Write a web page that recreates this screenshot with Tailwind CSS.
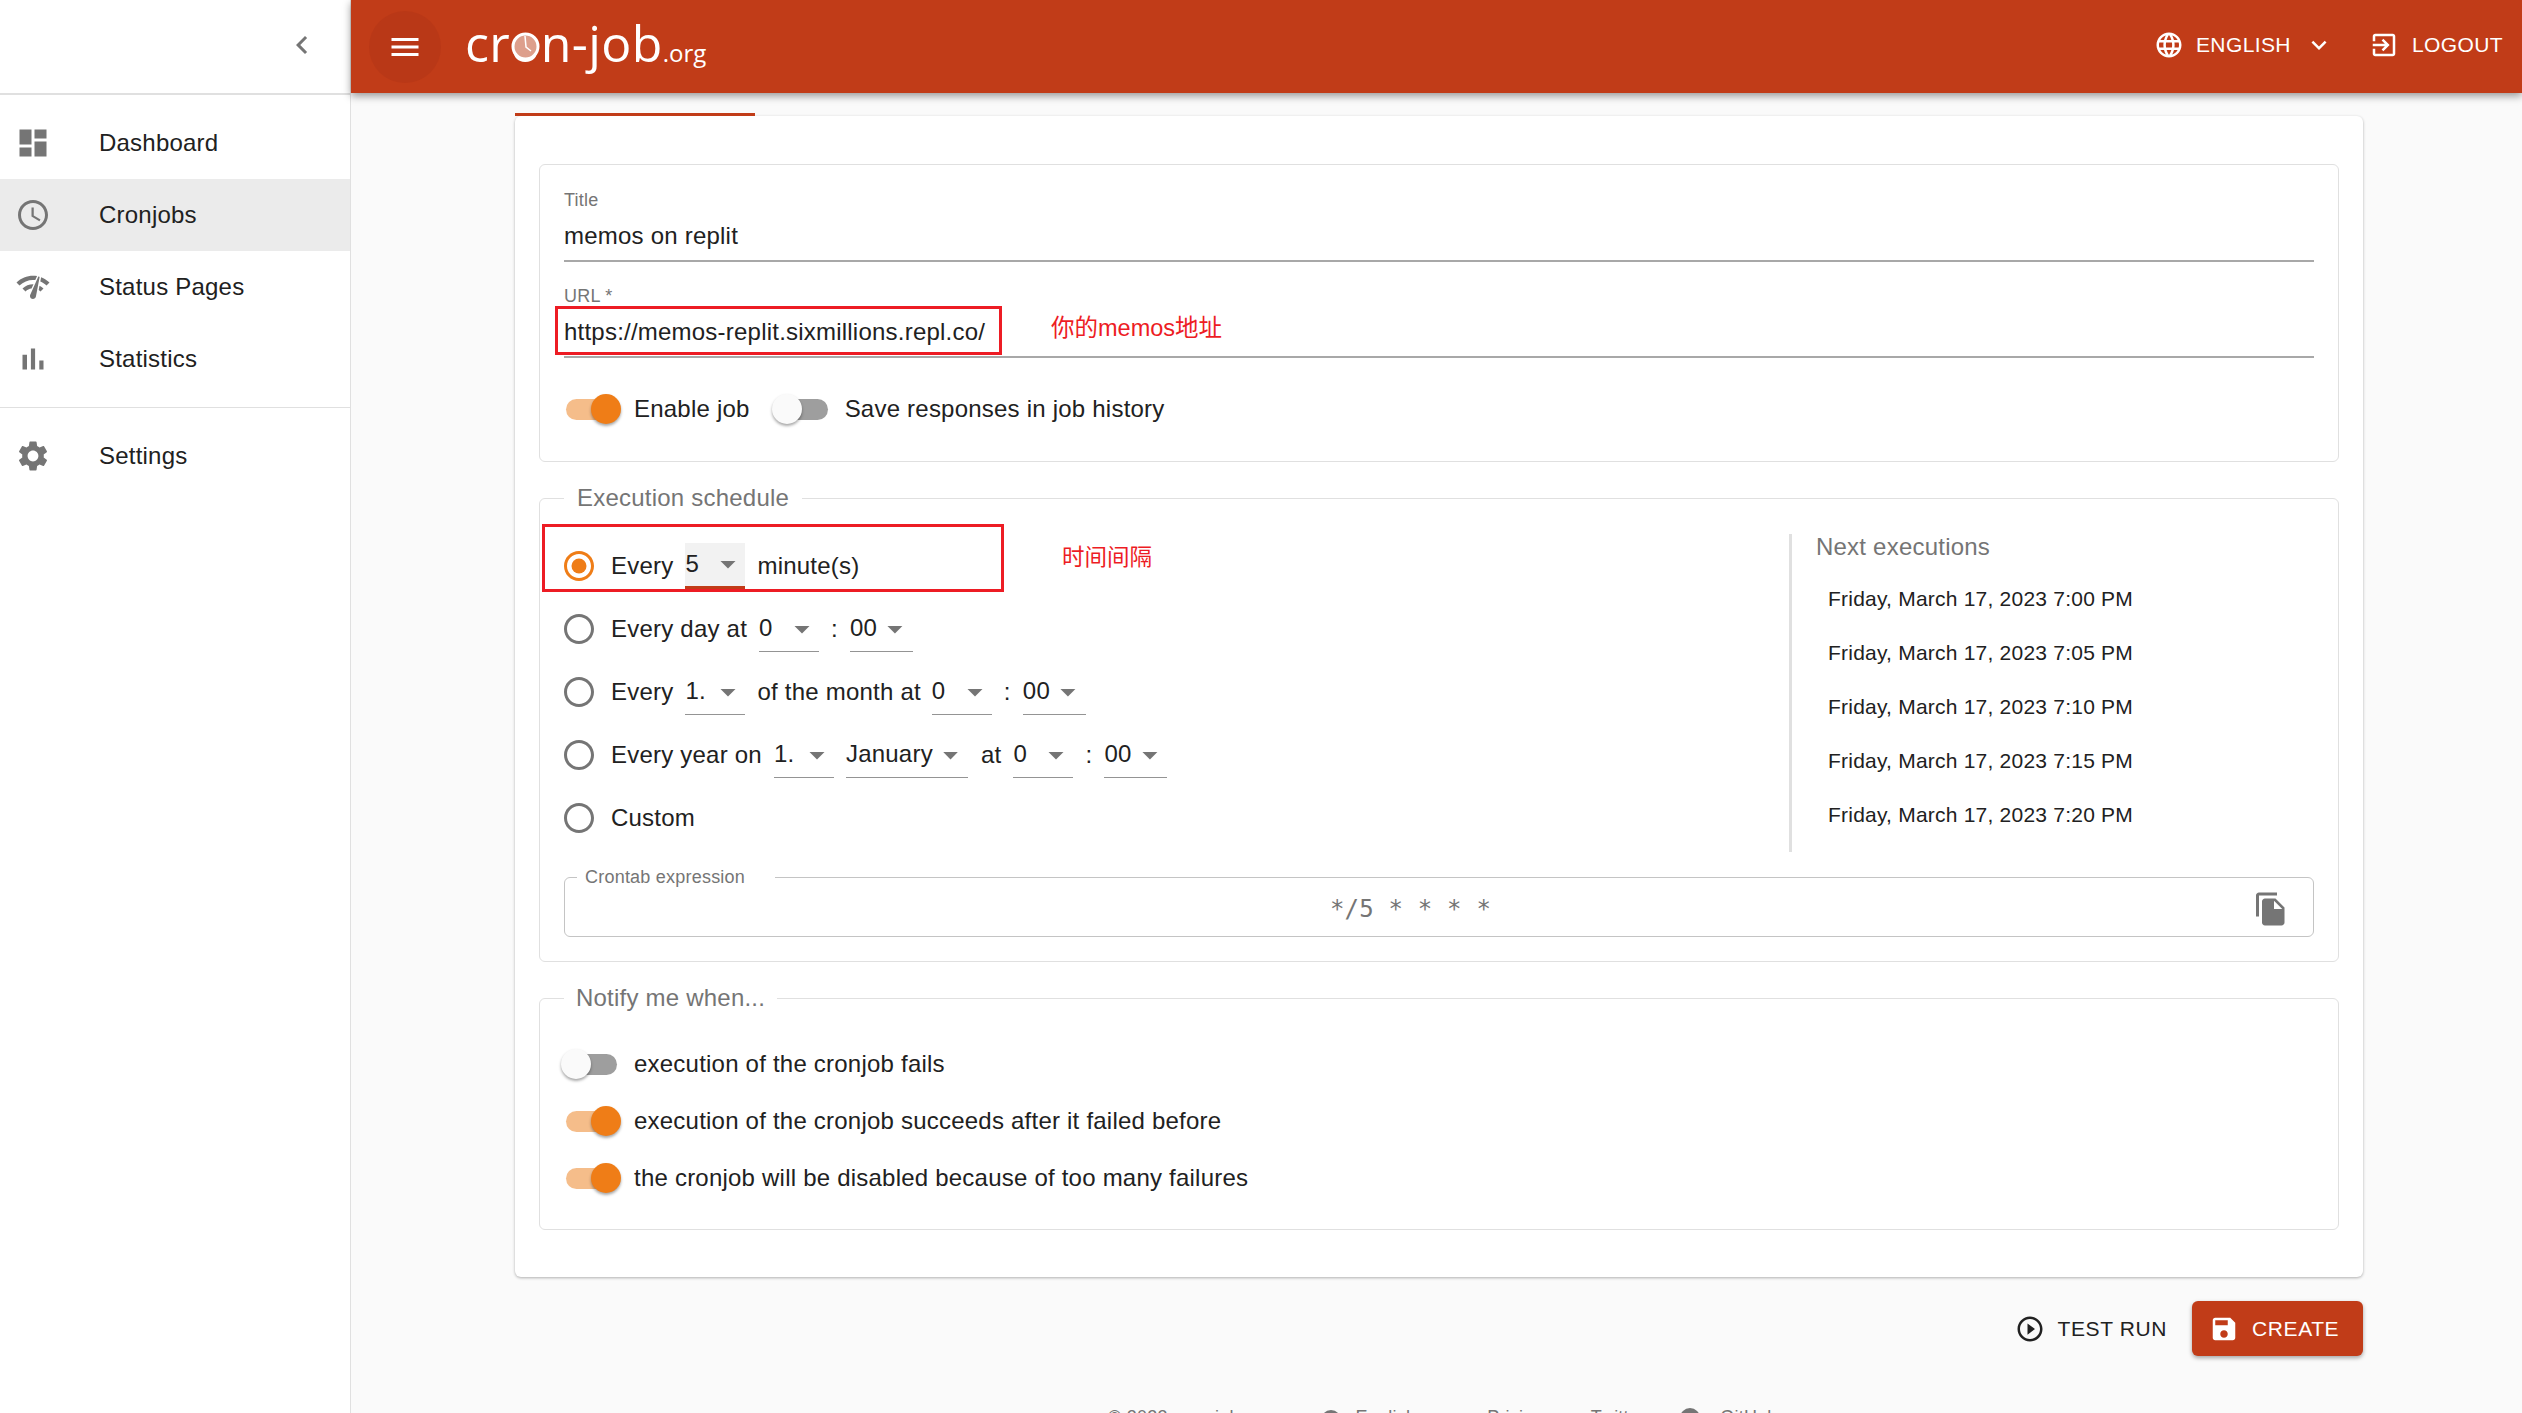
<!DOCTYPE html>
<html lang="en"><head><meta charset="utf-8"><title>cron-job.org</title>
<script src="https://cdn.jsdelivr.net/npm/@tailwindcss/browser@4"></script>
</head>
<body class="bg-[#fafafa] font-['Liberation_Sans',Arial,sans-serif] text-[24px] tracking-[0.22px] text-[#212121] overflow-hidden">
<div class="flex h-[1413px] w-[2522px] overflow-hidden">
<!-- SIDEBAR -->
<aside class="w-[351px] shrink-0 bg-white border-r border-[#e0e0e0] flex flex-col">
  <div class="h-[95px] border-b-2 border-[#e0e0e0] flex items-center pl-[284px] pb-[3px]">
    <svg class="w-[36px] h-[36px] fill-[#757575]" viewBox="0 0 24 24"><path d="M15.41 7.41L14 6l-6 6 6 6 1.41-1.41L10.83 12z"/></svg>
  </div>
  <nav class="pt-[12px] pb-[12px] border-b border-[#e0e0e0]">
    <a class="h-[72px] flex items-center pl-[15px]"><svg class="w-[36px] h-[36px] fill-[#757575]" viewBox="0 0 24 24"><path d="M3 13h8V3H3v10zm0 8h8v-6H3v6zm10 0h8V11h-8v10zm0-18v6h8V3h-8z"/></svg><span class="ml-[48px]">Dashboard</span></a>
    <a class="h-[72px] flex items-center pl-[15px] bg-[#ebebeb]"><svg class="w-[36px] h-[36px] fill-[#757575]" viewBox="0 0 24 24"><path d="M11.99 2C6.47 2 2 6.48 2 12s4.47 10 9.99 10C17.52 22 22 17.52 22 12S17.52 2 11.99 2zM12 20c-4.42 0-8-3.58-8-8s3.58-8 8-8 8 3.58 8 8-3.58 8-8 8zm.5-13H11v6l5.25 3.15.75-1.23-4.5-2.67z"/></svg><span class="ml-[48px]">Cronjobs</span></a>
    <a class="h-[72px] flex items-center pl-[15px]"><svg class="w-[36px] h-[36px] fill-[#757575]" viewBox="0 0 24 24"><path d="M15.9 5c-.17 0-.32.09-.41.23l-.07.15-5.18 11.65c-.16.29-.26.61-.26.96 0 1.11.9 2.01 2.01 2.01.96 0 1.77-.68 1.96-1.59l.01-.03L16.4 5.5c0-.28-.22-.5-.5-.5zM1 9l2 2c2.88-2.88 6.79-4.08 10.53-3.62l1.19-2.68C9.89 3.84 4.74 5.27 1 9zm20 2l2-2c-1.64-1.64-3.55-2.82-5.59-3.57l-.53 2.82c1.5.62 2.9 1.53 4.12 2.75zm-4 4l2-2c-.8-.8-1.7-1.42-2.66-1.89l-.55 2.92c.42.27.83.59 1.21.97zM5 13l2 2c1.13-1.13 2.56-1.79 4.03-2l1.28-2.88c-2.63-.08-5.3.87-7.31 2.88z"/></svg><span class="ml-[48px]">Status Pages</span></a>
    <a class="h-[72px] flex items-center pl-[15px]"><svg class="w-[36px] h-[36px] fill-[#757575]" viewBox="0 0 24 24"><path d="M5 9.2h3V19H5zM10.6 5h2.8v14h-2.8zm5.6 8H19v6h-2.8z"/></svg><span class="ml-[48px]">Statistics</span></a>
  </nav>
  <div class="pt-[12px]">
    <a class="h-[72px] flex items-center pl-[15px]"><svg class="w-[36px] h-[36px] fill-[#757575]" viewBox="0 0 24 24"><path d="M19.14 12.94c.04-.3.06-.61.06-.94 0-.32-.02-.64-.07-.94l2.03-1.58c.18-.14.23-.41.12-.61l-1.92-3.32c-.12-.22-.37-.29-.59-.22l-2.39.96c-.5-.38-1.03-.7-1.62-.94l-.36-2.54c-.04-.24-.24-.41-.48-.41h-3.84c-.24 0-.43.17-.47.41l-.36 2.54c-.59.24-1.13.57-1.62.94l-2.39-.96c-.22-.08-.47 0-.59.22L2.74 8.87c-.12.21-.08.47.12.61l2.03 1.58c-.05.3-.09.63-.09.94s.02.64.07.94l-2.03 1.58c-.18.14-.23.41-.12.61l1.92 3.32c.12.22.37.29.59.22l2.39-.96c.5.38 1.03.7 1.62.94l.36 2.54c.05.24.24.41.48.41h3.84c.24 0 .44-.17.47-.41l.36-2.54c.59-.24 1.13-.56 1.62-.94l2.39.96c.22.08.47 0 .59-.22l1.92-3.32c.12-.22.07-.47-.12-.61l-2.01-1.58zM12 15.6c-1.98 0-3.6-1.62-3.6-3.6s1.62-3.6 3.6-3.6 3.6 1.62 3.6 3.6-1.62 3.6-3.6 3.6z"/></svg><span class="ml-[48px]">Settings</span></a>
  </div>
</aside>
<!-- MAIN -->
<div class="flex-1 min-w-0 flex flex-col">
  <header class="h-[93px] shrink-0 bg-[#c13c18] text-white flex items-center pl-[18px] pr-[19px] shadow-[0_3px_8px_rgba(0,0,0,0.4)] relative z-10">
    <div class="w-[72px] h-[72px] rounded-full bg-[#b93817] flex items-center justify-center">
      <svg class="w-[36px] h-[36px] fill-white" viewBox="0 0 24 24"><path d="M3 18h18v-2H3v2zm0-5h18v-2H3v2zm0-7v2h18V6H3z"/></svg>
    </div>
    <div class="ml-[24px] mt-[2px] font-['Open_Sans',sans-serif] font-normal text-[50px] leading-[60px] tracking-[0.4px] flex items-baseline">
      <span>cr</span><span class="relative">o<svg class="absolute left-[1px] top-[19px] w-[29px] h-[29px]" viewBox="0 0 29 29"><circle cx="14.5" cy="14.5" r="12.5" fill="#dd9f8c" stroke="#fff" stroke-width="3"/><path d="M14 4 L15 15 L20 19" fill="none" stroke="#fff" stroke-width="1.5"/></svg></span><span>n-job</span><span class="text-[24px] tracking-normal font-normal">.org</span>
    </div>
    <div class="ml-auto flex items-center text-[21px] tracking-[0.4px] pb-[3px]">
      <svg class="w-[30px] h-[30px] fill-white" viewBox="0 0 24 24"><path d="M11.99 2C6.47 2 2 6.48 2 12s4.47 10 9.99 10C17.52 22 22 17.52 22 12S17.52 2 11.99 2zm6.93 6h-2.95c-.32-1.25-.78-2.45-1.38-3.56 1.84.63 3.37 1.91 4.33 3.56zM12 4.04c.83 1.2 1.48 2.53 1.91 3.96h-3.82c.43-1.43 1.08-2.76 1.91-3.96zM4.26 14C4.1 13.36 4 12.69 4 12s.1-1.36.26-2h3.38c-.08.66-.14 1.32-.14 2 0 .68.06 1.34.14 2H4.26zm.82 2h2.95c.32 1.25.78 2.45 1.38 3.56-1.84-.63-3.37-1.9-4.33-3.56zm2.95-8H5.08c.96-1.66 2.49-2.93 4.33-3.56C8.81 5.55 8.35 6.75 8.03 8zM12 19.96c-.83-1.2-1.48-2.53-1.91-3.96h3.82c-.43 1.43-1.08 2.76-1.91 3.96zM14.34 14H9.66c-.09-.66-.16-1.32-.16-2 0-.68.07-1.35.16-2h4.68c.09.65.16 1.32.16 2 0 .68-.07 1.34-.16 2zm.25 5.56c.6-1.11 1.06-2.31 1.38-3.56h2.95c-.96 1.65-2.49 2.93-4.33 3.56zM16.36 14c.08-.66.14-1.32.14-2 0-.68-.06-1.34-.14-2h3.38c.16.64.26 1.31.26 2s-.1 1.36-.26 2h-3.38z"/></svg>
      <span class="ml-[12px]">ENGLISH</span>
      <svg class="ml-[13px] w-[30px] h-[30px] fill-white" viewBox="0 0 24 24"><path d="M16.59 8.59L12 13.17 7.41 8.59 6 10l6 6 6-6z"/></svg>
      <svg class="ml-[35px] w-[30px] h-[30px] fill-white" viewBox="0 0 24 24"><path d="M10.09 15.59L11.5 17l5-5-5-5-1.41 1.41L12.67 11H3v2h9.67l-2.58 2.59zM19 3H5c-1.11 0-2 .9-2 2v4h2V5h14v14H5v-4H3v4c0 1.1.89 2 2 2h14c1.1 0 2-.9 2-2V5c0-1.1-.9-2-2-2z"/></svg>
      <span class="ml-[13px]">LOGOUT</span>
    </div>
  </header>

  <main class="pl-[164px] pr-[159px] pt-[23px]">
    <section class="relative bg-white rounded-md shadow-[0_1px_3px_rgba(0,0,0,0.3)] px-[24px] pt-[48px] pb-[47px]">
      <div class="absolute left-0 top-[-3px] w-[240px] h-[3px] bg-[#c13c18]"></div>

      <!-- basics -->
      <div class="relative border border-[#e0e0e0] rounded-md h-[298px] px-[24px] pt-[23px]">
        <div class="h-[24px] leading-[24px] text-[18px] text-[#757575]">Title</div>
        <div class="h-[50px] leading-[47px] border-b-2 border-[#a8a8a8] mb-[22px]">memos on replit</div>
        <div class="h-[24px] leading-[24px] text-[18px] text-[#757575]">URL *</div>
        <div class="h-[50px] leading-[48px] border-b-2 border-[#a8a8a8]">https://memos-replit.sixmillions.repl.co/</div>
        <div class="flex items-center h-[36px] mt-[33px] -ml-[3px]">
          <span class="relative block w-[60px] h-[30px] shrink-0"><span class="absolute left-[5px] top-[5px] w-[51px] h-[21px] rounded-full bg-[#f5bd8a]"></span><span class="absolute right-0 top-0 w-[30px] h-[30px] rounded-full bg-[#ef7d17] shadow-[0_2px_3px_rgba(0,0,0,0.35)]"></span></span>
          <span class="ml-[13px]">Enable job</span>
          <span class="relative block w-[60px] h-[30px] shrink-0 ml-[22px]"><span class="absolute left-[5px] top-[5px] w-[51px] h-[21px] rounded-full bg-[#9e9e9e]"></span><span class="absolute left-0 top-0 w-[30px] h-[30px] rounded-full bg-[#fafafa] shadow-[0_2px_3px_rgba(0,0,0,0.35)]"></span></span>
          <span class="ml-[13px]">Save responses in job history</span>
        </div>
        <div class="absolute left-[15px] top-[141px] w-[447px] h-[49px] border-[3px] border-[#ed1c24]"></div>
        <div class="absolute left-[511px] top-[149px] text-[#ed1c24] text-[23.5px] tracking-normal leading-[28px] font-['Liberation_Sans','Noto_Sans_CJK_SC',sans-serif]">你的memos地址</div>
      </div>

      <!-- schedule -->
      <fieldset class="relative border border-[#e0e0e0] rounded-md mt-[18px] px-[24px] pb-[24px]">
        <legend class="px-[13px] leading-[36px] text-[#757575]">Execution schedule</legend>
        <div class="flex mt-[18px] h-[318px]">
          <div class="w-[1225px] shrink-0">
            <!-- row 1 -->
            <div class="h-[63px] flex items-center -ml-[3px]">
              <svg class="w-[36px] h-[36px] shrink-0" viewBox="0 0 24 24"><path fill="#ef7d17" d="M12 2C6.48 2 2 6.48 2 12s4.48 10 10 10 10-4.48 10-10S17.52 2 12 2zm0 18c-4.42 0-8-3.58-8-8s3.58-8 8-8 8 3.58 8 8-3.58 8-8 8z"/><circle cx="12" cy="12" r="5" fill="#ef7d17"/></svg>
              <span class="ml-[14px]">Every</span>
              <span class="ml-[12px] w-[60px] h-[46px] flex items-center justify-between bg-[#f2f2f2] border-b-[3px] border-[#c13c18]"><span>5</span><svg class="w-[36px] h-[36px] -mr-[1px] fill-[#757575]" viewBox="0 0 24 24"><path d="M7 10l5 5 5-5z"/></svg></span>
              <span class="ml-[12px]">minute(s)</span>
            </div>
            <!-- row 2 -->
            <div class="h-[63px] flex items-center -ml-[3px]">
              <svg class="w-[36px] h-[36px] shrink-0 fill-[#757575]" viewBox="0 0 24 24"><path d="M12 2C6.48 2 2 6.48 2 12s4.48 10 10 10 10-4.48 10-10S17.52 2 12 2zm0 18c-4.42 0-8-3.58-8-8s3.58-8 8-8 8 3.58 8 8-3.58 8-8 8z"/></svg>
              <span class="ml-[14px]">Every day at</span>
              <span class="ml-[12px] w-[60px] h-[46px] flex items-center justify-between border-b border-[#949494] mt-[1px]"><span class="-mt-[1px]">0</span><svg class="w-[36px] h-[36px] -mr-[1px] fill-[#757575]" viewBox="0 0 24 24"><path d="M7 10l5 5 5-5z"/></svg></span>
              <span class="ml-[12px] w-[7px]">:</span>
              <span class="ml-[12px] w-[63px] h-[46px] flex items-center justify-between border-b border-[#949494] mt-[1px]"><span class="-mt-[1px]">00</span><svg class="w-[36px] h-[36px] fill-[#757575]" viewBox="0 0 24 24"><path d="M7 10l5 5 5-5z"/></svg></span>
            </div>
            <!-- row 3 -->
            <div class="h-[63px] flex items-center -ml-[3px]">
              <svg class="w-[36px] h-[36px] shrink-0 fill-[#757575]" viewBox="0 0 24 24"><path d="M12 2C6.48 2 2 6.48 2 12s4.48 10 10 10 10-4.48 10-10S17.52 2 12 2zm0 18c-4.42 0-8-3.58-8-8s3.58-8 8-8 8 3.58 8 8-3.58 8-8 8z"/></svg>
              <span class="ml-[14px]">Every</span>
              <span class="ml-[12px] w-[60px] h-[46px] flex items-center justify-between border-b border-[#949494] mt-[1px]"><span class="-mt-[1px]">1.</span><svg class="w-[36px] h-[36px] -mr-[1px] fill-[#757575]" viewBox="0 0 24 24"><path d="M7 10l5 5 5-5z"/></svg></span>
              <span class="ml-[12px]">of the month at</span>
              <span class="ml-[11px] w-[60px] h-[46px] flex items-center justify-between border-b border-[#949494] mt-[1px]"><span class="-mt-[1px]">0</span><svg class="w-[36px] h-[36px] -mr-[1px] fill-[#757575]" viewBox="0 0 24 24"><path d="M7 10l5 5 5-5z"/></svg></span>
              <span class="ml-[12px] w-[7px]">:</span>
              <span class="ml-[12px] w-[63px] h-[46px] flex items-center justify-between border-b border-[#949494] mt-[1px]"><span class="-mt-[1px]">00</span><svg class="w-[36px] h-[36px] fill-[#757575]" viewBox="0 0 24 24"><path d="M7 10l5 5 5-5z"/></svg></span>
            </div>
            <!-- row 4 -->
            <div class="h-[63px] flex items-center -ml-[3px]">
              <svg class="w-[36px] h-[36px] shrink-0 fill-[#757575]" viewBox="0 0 24 24"><path d="M12 2C6.48 2 2 6.48 2 12s4.48 10 10 10 10-4.48 10-10S17.52 2 12 2zm0 18c-4.42 0-8-3.58-8-8s3.58-8 8-8 8 3.58 8 8-3.58 8-8 8z"/></svg>
              <span class="ml-[14px]">Every year on</span>
              <span class="ml-[12px] w-[60px] h-[46px] flex items-center justify-between border-b border-[#949494] mt-[1px]"><span class="-mt-[1px]">1.</span><svg class="w-[36px] h-[36px] -mr-[1px] fill-[#757575]" viewBox="0 0 24 24"><path d="M7 10l5 5 5-5z"/></svg></span>
              <span class="ml-[12px] w-[122px] h-[46px] flex items-center justify-between border-b border-[#949494] mt-[1px]"><span class="-mt-[1px]">January</span><svg class="w-[36px] h-[36px] fill-[#757575]" viewBox="0 0 24 24"><path d="M7 10l5 5 5-5z"/></svg></span>
              <span class="ml-[13px]">at</span>
              <span class="ml-[12px] w-[60px] h-[46px] flex items-center justify-between border-b border-[#949494] mt-[1px]"><span class="-mt-[1px]">0</span><svg class="w-[36px] h-[36px] -mr-[1px] fill-[#757575]" viewBox="0 0 24 24"><path d="M7 10l5 5 5-5z"/></svg></span>
              <span class="ml-[12px] w-[7px]">:</span>
              <span class="ml-[12px] w-[63px] h-[46px] flex items-center justify-between border-b border-[#949494] mt-[1px]"><span class="-mt-[1px]">00</span><svg class="w-[36px] h-[36px] fill-[#757575]" viewBox="0 0 24 24"><path d="M7 10l5 5 5-5z"/></svg></span>
            </div>
            <!-- row 5 -->
            <div class="h-[63px] flex items-center -ml-[3px]">
              <svg class="w-[36px] h-[36px] shrink-0 fill-[#757575]" viewBox="0 0 24 24"><path d="M12 2C6.48 2 2 6.48 2 12s4.48 10 10 10 10-4.48 10-10S17.52 2 12 2zm0 18c-4.42 0-8-3.58-8-8s3.58-8 8-8 8 3.58 8 8-3.58 8-8 8z"/></svg>
              <span class="ml-[14px]">Custom</span>
            </div>
          </div>
          <div class="flex-1 border-l-[3px] border-[#e0e0e0] pl-[24px]">
            <div class="h-[38px] leading-[26px] text-[#757575]">Next executions</div>
            <ul class="pl-[12px] text-[21px] leading-[54px]">
              <li>Friday, March 17, 2023 7:00 PM</li>
              <li>Friday, March 17, 2023 7:05 PM</li>
              <li>Friday, March 17, 2023 7:10 PM</li>
              <li>Friday, March 17, 2023 7:15 PM</li>
              <li>Friday, March 17, 2023 7:20 PM</li>
            </ul>
          </div>
        </div>
        <fieldset class="border border-[#c4c4c4] rounded-md mt-[13px]">
          <legend class="ml-[12px] pl-[8px] pr-[30px] text-[18px] leading-[24px] text-[#757575]">Crontab expression</legend>
          <div class="h-[47px] flex items-center pb-[8px]">
            <div class="flex-1 text-center pl-[3px] font-['DejaVu_Sans_Mono',monospace] text-[24px] tracking-[0.2px] text-[#757575] whitespace-pre">*/5 * * * *</div>
            <svg class="w-[36px] h-[36px] mr-[24px] fill-[#757575]" viewBox="0 0 24 24"><path d="M16 1H4c-1.1 0-2 .9-2 2v14h2V3h12V1zm-1 4l6 6v10c0 1.1-.9 2-2 2H7.99C6.89 23 6 22.1 6 21l.01-14c0-1.1.89-2 1.99-2h7zm-1 7h5.5L14 6.5V12z"/></svg>
          </div>
        </fieldset>
        <div class="absolute left-[2px] top-[8px] w-[462px] h-[68px] border-[3px] border-[#ed1c24] pointer-events-none"></div>
        <div class="absolute left-[522px] top-[25px] text-[#ed1c24] text-[22.5px] tracking-normal leading-[28px] font-['Noto_Sans_CJK_SC',sans-serif]">时间间隔</div>
      </fieldset>

      <!-- notify -->
      <fieldset class="border border-[#e0e0e0] rounded-md mt-[18px] px-[24px] pt-[30px] pb-[33px]">
        <legend class="px-[12px] leading-[36px] text-[#757575]">Notify me when...</legend>
        <div class="flex flex-col gap-[21px] -ml-[3px]">
          <div class="flex items-center h-[36px]">
            <span class="relative block w-[60px] h-[30px] shrink-0"><span class="absolute left-[5px] top-[5px] w-[51px] h-[21px] rounded-full bg-[#9e9e9e]"></span><span class="absolute left-0 top-0 w-[30px] h-[30px] rounded-full bg-[#fafafa] shadow-[0_2px_3px_rgba(0,0,0,0.35)]"></span></span>
            <span class="ml-[13px]">execution of the cronjob fails</span>
          </div>
          <div class="flex items-center h-[36px]">
            <span class="relative block w-[60px] h-[30px] shrink-0"><span class="absolute left-[5px] top-[5px] w-[51px] h-[21px] rounded-full bg-[#f5bd8a]"></span><span class="absolute right-0 top-0 w-[30px] h-[30px] rounded-full bg-[#ef7d17] shadow-[0_2px_3px_rgba(0,0,0,0.35)]"></span></span>
            <span class="ml-[13px]">execution of the cronjob succeeds after it failed before</span>
          </div>
          <div class="flex items-center h-[36px]">
            <span class="relative block w-[60px] h-[30px] shrink-0"><span class="absolute left-[5px] top-[5px] w-[51px] h-[21px] rounded-full bg-[#f5bd8a]"></span><span class="absolute right-0 top-0 w-[30px] h-[30px] rounded-full bg-[#ef7d17] shadow-[0_2px_3px_rgba(0,0,0,0.35)]"></span></span>
            <span class="ml-[13px]">the cronjob will be disabled because of too many failures</span>
          </div>
        </div>
      </fieldset>
    </section>

    <!-- actions -->
    <div class="flex justify-end items-center mt-[24px] text-[21px] tracking-[0.6px]">
      <svg class="w-[30px] h-[30px] fill-[#212121]" viewBox="0 0 24 24"><path d="M10 16.5l6-4.5-6-4.5v9zM12 2C6.48 2 2 6.48 2 12s4.48 10 10 10 10-4.48 10-10S17.52 2 12 2zm0 18c-4.41 0-8-3.59-8-8s3.59-8 8-8 8 3.59 8 8-3.59 8-8 8z"/></svg>
      <span class="ml-[13px]">TEST RUN</span>
      <button class="ml-[25px] h-[55px] w-[171px] pl-[17px] rounded-md bg-[#c13c18] text-white flex items-center shadow-[0_2px_4px_rgba(0,0,0,0.35)]">
        <svg class="w-[30px] h-[30px] fill-white" viewBox="0 0 24 24"><path d="M17 3H5c-1.11 0-2 .9-2 2v14c0 1.1.89 2 2 2h14c1.1 0 2-.9 2-2V7l-4-4zm-5 16c-1.66 0-3-1.34-3-3s1.34-3 3-3 3 1.34 3 3-1.34 3-3 3zm3-10H5V5h10v4z"/></svg>
        <span class="ml-[13px]">CREATE</span>
      </button>
    </div>

    <!-- footer -->
    <footer class="mt-[49px] h-[30px] pl-[593px] flex items-start text-[18px] leading-[24px] text-[#757575] whitespace-nowrap">
      <span>© 2023 cron-job.org</span>
      <svg class="ml-[47px] w-[24px] h-[24px] fill-[#757575] mt-[3px]" viewBox="0 0 24 24"><circle cx="12" cy="12" r="10"/></svg>
      <span class="ml-[13px]">English</span>
      <span class="ml-[71px]">Pricing</span>
      <span class="ml-[47px]">Twitter</span>
      <svg class="ml-[33px] w-[24px] h-[24px] fill-[#757575] mt-[1px]" viewBox="0 0 24 24"><circle cx="12" cy="12" r="10"/></svg>
      <span class="ml-[18px]">GitHub</span>
    </footer>
  </main>
</div>
</div>
</body></html>
